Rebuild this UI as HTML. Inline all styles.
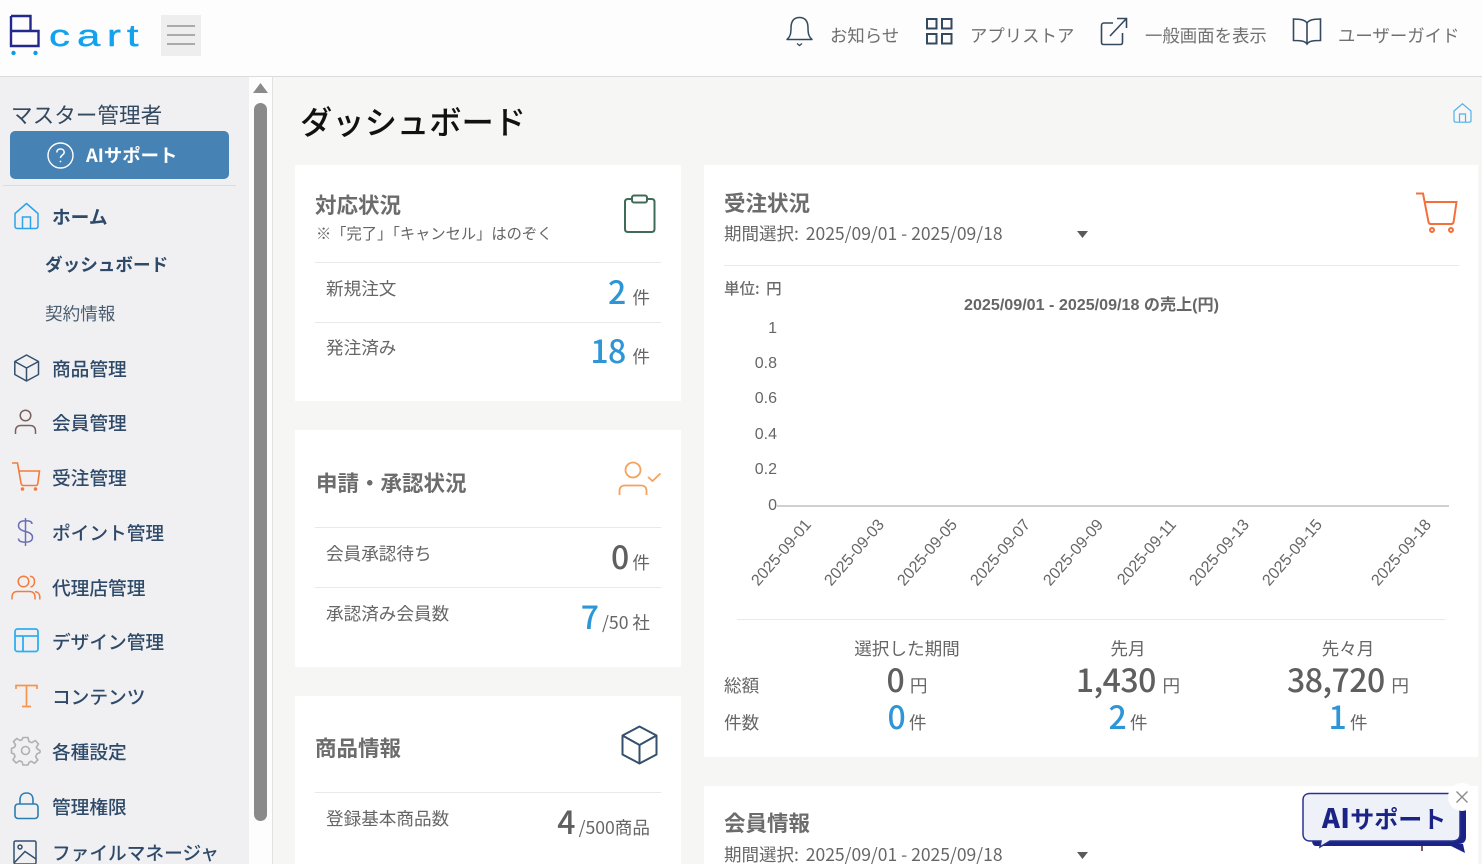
<!DOCTYPE html>
<html lang="ja"><head><meta charset="utf-8"><title>ダッシュボード</title>
<style>
*{box-sizing:border-box}
html,body{margin:0;padding:0;width:1482px;height:864px;overflow:hidden}
body{position:relative;background:#f6f6f4;font-family:"Liberation Sans","Noto Sans CJK JP",sans-serif;color:#666}
.b{position:absolute}
.t{position:absolute;white-space:nowrap;line-height:1;font-family:"Noto Sans CJK JP",sans-serif}
svg{position:absolute;overflow:visible;fill:none}
.hd{font-size:17.4px;color:#707070;top:27px}
.nav{left:52px;font-size:18.7px;color:#2f4a68;font-weight:500}
.card{position:absolute;background:#fff}
.ttl{font-size:21.5px;font-weight:700;color:#6c6c6c}
.lb{font-size:17.6px;color:#666;left:326px}
.hr{position:absolute;height:1px;background:#e9e9e9}
.num{font-size:32px;color:#5f5f5f;font-weight:500;letter-spacing:-.5px}
.bl{color:#2e96d6}
.u{font-size:17.6px;color:#666}
.g{margin-left:3px}
.g2{margin-left:2px}
.r{text-align:right}
.c{text-align:center;transform:translateX(-50%)}
.ax{font:16px "Liberation Sans",sans-serif;fill:#666}
.m{margin-right:3px}
</style></head><body>

<!-- header -->
<div class="b" style="left:0;top:0;width:1482px;height:77px;background:#fdfdfd;border-bottom:1px solid #dcdcdc"></div>
<svg style="left:0;top:0" width="150" height="60">
<path d="M11 16H30.500V31M11 16V46H38.500V31H11" stroke="#23298a" stroke-width="2.400"/>
<circle cx="13.500" cy="53" r="2.200" fill="#0b9bef"/><circle cx="35.500" cy="53" r="2.200" fill="#0b9bef"/>
<text transform="scale(1.35 1)" x="36.300 57 79.300 94" y="46" font-family="Liberation Sans" font-size="31" fill="#13a2ee" stroke="#13a2ee" stroke-width=".4">cart</text>
</svg>
<div class="b" style="left:161px;top:15px;width:40px;height:41px;background:#eeeeee"></div>
<div class="b" style="left:167px;top:25px;width:28px;height:2px;background:#aaa"></div>
<div class="b" style="left:167px;top:34px;width:28px;height:2px;background:#aaa"></div>
<div class="b" style="left:167px;top:43px;width:28px;height:2px;background:#aaa"></div>

<svg style="left:785px;top:15px" width="30" height="32" stroke="#34495e" stroke-width="1.500">
<path d="M2 24.500C5 22 6 19 6 13C6 6 9 2.500 14.500 2.500C20 2.500 23 6 23 13C23 19 24 22 27 24.500Z" stroke-linejoin="round"/><path d="M12 28.500L14.500 30.500L17 28.500" stroke-width="1.300"/></svg>
<div class="t hd" style="left:830px">お知らせ</div>
<svg style="left:926px;top:18px" width="27" height="27" stroke="#34495e" stroke-width="2"><rect x="1" y="1" width="9.500" height="9.500"/><rect x="16" y="1" width="9.500" height="9.500"/><rect x="1" y="16" width="9.500" height="9.500"/><rect x="16" y="16" width="9.500" height="9.500"/></svg>
<div class="t hd" style="left:970px">アプリストア</div>
<svg style="left:1100px;top:17px" width="29" height="29" stroke="#34495e" stroke-width="1.600"><path d="M13 6H4C2 6 1.500 7 1.500 9V25C1.500 27 2 27.500 4 27.500H20C22 27.500 22.500 27 22.500 25V16"/><path d="M10 19L26 2M17 1.500H26.500V11"/></svg>
<div class="t hd" style="left:1145px">一般画面を表示</div>
<svg style="left:1292px;top:17px" width="30" height="29" stroke="#34495e" stroke-width="1.600"><path d="M15 6C13 3 9 2 1.500 2V23.500C9 23.500 13 24 15 27C17 24 21 23.500 28.500 23.500V2C21 2 17 3 15 6ZM15 6V27"/></svg>
<div class="t hd" style="left:1338px">ユーザーガイド</div>

<!-- sidebar -->
<div class="b" style="left:0;top:77px;width:249px;height:787px;background:#f0f0f3"></div>
<div class="b" style="left:249px;top:77px;width:23px;height:787px;background:#fdfdfd"></div>
<div class="b" style="left:272px;top:77px;width:1px;height:787px;background:#e2e2e2"></div>
<svg style="left:253px;top:82px" width="16" height="12"><path d="M7.500 1L15 11H0Z" fill="#8a8a8a"/></svg>
<div class="b" style="left:254px;top:103px;width:13px;height:718px;background:#8a8a8a;border-radius:7px"></div>

<div class="t" style="left:11px;top:104px;font-size:21.6px;color:#33495f">マスター管理者</div>
<div class="b" style="left:10px;top:131px;width:219px;height:48px;background:#4682b4;border-radius:5px"></div>
<svg style="left:47px;top:142px" width="28" height="28" stroke="#fff" stroke-width="1.400"><circle cx="13.500" cy="13.500" r="12.500"/><path d="M9.800 10.500C9.800 8 11.500 7 13.500 7C15.700 7 17.200 8.300 17.200 10.200C17.200 13 13.500 13 13.500 16" stroke-width="1.500"/><circle cx="13.500" cy="19.500" r=".9" fill="#fff" stroke="none"/></svg>
<div class="t" style="left:86px;top:146px;font-size:18.4px;font-weight:700;color:#fff">AIサポート</div>
<div class="b" style="left:3px;top:185px;width:233px;height:1px;background:#dcdcdc"></div>

<svg style="left:14px;top:202px" width="26" height="28" stroke="#2da4ea" stroke-width="1.500"><path d="M1 11.500L12.500 1.500L24 11.500V24C24 26 23 26.500 21.500 26.500H3.500C2 26.500 1 26 1 24Z" stroke-linejoin="round"/><path d="M8.500 26.500V15H16.500V26.500"/></svg>
<div class="t nav" style="top:208px;font-weight:700">ホーム</div>
<div class="t" style="left:45px;top:256px;font-size:17.6px;font-weight:700;color:#2f4a68">ダッシュボード</div>
<div class="t" style="left:45px;top:305px;font-size:17.6px;color:#4a5d70">契約情報</div>

<svg style="left:14px;top:354px" width="26" height="28" stroke="#34506c" stroke-width="1.500" stroke-linejoin="round"><path d="M12.500 1L24.500 7.500V20.500L12.500 27L.8 20.500V7.500ZM.8 7.500L12.500 14L24.500 7.500M12.500 14V27"/></svg>
<div class="t nav" style="top:360px">商品管理</div>
<svg style="left:14px;top:409px" width="24" height="26" stroke="#7a5f5c" stroke-width="1.500"><circle cx="11.500" cy="6.500" r="5.300"/><path d="M1.500 25V22C1.500 18.500 3.500 16.500 7 16.500H16C19.500 16.500 21.500 18.500 21.500 22V25"/></svg>
<div class="t nav" style="top:414px">会員管理</div>
<svg style="left:11px;top:461px" width="30" height="30" stroke="#f47a3a" stroke-width="1.600"><path d="M1 2H6.500L10 22C10.300 24 11 24.500 12.500 24.500H25C26 24.500 26.500 24 26.800 22.500L28.500 10H7.500"/><circle cx="11.500" cy="28" r="1.800" fill="#f47a3a" stroke="none"/><circle cx="24.500" cy="28" r="1.800" fill="#f47a3a" stroke="none"/></svg>
<div class="t nav" style="top:469px">受注管理</div>
<svg style="left:16px;top:517px" width="20" height="30" stroke="#6b6fb5" stroke-width="1.500"><path d="M9.500 1V29M16 7C16 4.500 13.500 3.800 9.500 3.800C5 3.800 2.500 5.500 2.500 8.800C2.500 12 5 13.500 9.500 14.500C14 15.500 16.500 17 16.500 20.300C16.500 23.500 14 25.200 9.500 25.200C5 25.200 2.500 24 2.500 21.500"/></svg>
<div class="t nav" style="top:524px">ポイント管理</div>
<svg style="left:11px;top:575px" width="30" height="26" stroke="#f47d3c" stroke-width="1.500"><circle cx="12.500" cy="6.500" r="5.300"/><path d="M1 24.500V22C1 18.500 3 16.500 6.500 16.500H18.500C22 16.500 24 18.500 24 22V24.500"/><path d="M19 1.300C22 1.500 23.500 3.500 23.500 6.500C23.500 9.500 22 11.500 19.500 12M24 16.800C27 17 28.800 19 28.800 22V24.500"/></svg>
<div class="t nav" style="top:579px">代理店管理</div>
<svg style="left:14px;top:628px" width="25" height="25" stroke="#30aef0" stroke-width="1.800"><rect x="1" y="1" width="23" height="22.500" rx="2.500"/><path d="M1 8H24M9 8V23.500"/></svg>
<div class="t nav" style="top:633px">デザイン管理</div>
<svg style="left:15px;top:684px" width="24" height="24" stroke="#f4954f" stroke-width="1.700"><path d="M1 5V1.500H22V5M11.500 1.500V22.500M7 22.500H16"/></svg>
<div class="t nav" style="top:688px">コンテンツ</div>
<svg style="left:11px;top:736px" width="30" height="30" stroke="#b0b0b0" stroke-width="1.600" stroke-linejoin="round"><circle cx="14.500" cy="14.500" r="4"/><path d="M12 1.500H17L18 5.500L20.800 6.700L24.300 4.500L27.500 8L25.300 11.300L26.300 13L29 14.500V16.500L25.800 18L24.700 20.800L26.800 24L23.500 27.300L20.300 25.300L18 26.300L17 29H12L11 25.800L8.500 24.800L5.200 27L2 23.800L4 20.500L3.200 18L.5 17V12.500L3.500 11.300L4.500 8.800L2.500 5.500L5.800 2.500L9 4.500L11 3.700Z"/></svg>
<div class="t nav" style="top:743px">各種設定</div>
<svg style="left:14px;top:792px" width="25" height="28" stroke="#2a7fb0" stroke-width="1.600"><path d="M6 12V8C6 3.500 8.500 1 12.500 1C16.500 1 19 3.500 19 8V12"/><rect x="1" y="12" width="23" height="14.500" rx="3"/></svg>
<div class="t nav" style="top:798px">管理権限</div>
<svg style="left:13px;top:840px" width="25" height="25" stroke="#34506c" stroke-width="1.500"><rect x="1" y="1" width="22" height="23" rx="1.500"/><circle cx="7" cy="7" r="2"/><path d="M1 23L12 11.500L23 19"/></svg>
<div class="t nav" style="top:844px">ファイルマネージャ</div>

<!-- title -->
<div class="t" style="left:300px;top:105px;font-size:32.3px;font-weight:500;color:#111">ダッシュボード</div>
<svg style="left:1453px;top:103px" width="19" height="20" stroke="#4fb0ec" stroke-width="1.200"><path d="M1 8L9.500 .8L18 8V17.500C18 18.800 17.200 19.200 16 19.200H3C1.800 19.200 1 18.800 1 17.500Z"/><path d="M6.500 19V11H12.500V19"/></svg>

<!-- card 1 -->
<div class="card" style="left:295px;top:165px;width:386px;height:236px"></div>
<div class="t ttl" style="left:315px;top:194px">対応状況</div>
<div class="t" style="left:316px;top:226px;font-size:15.25px;color:#666">※「完了」「キャンセル」はのぞく</div>
<svg style="left:624px;top:194px" width="32" height="40" stroke="#3f6b58" stroke-width="2"><path d="M8 5H4C2 5 1 6 1 8V35C1 37 2 38 4 38H27.500C29.500 38 30.500 37 30.500 35V8C30.500 6 29.500 5 27.500 5H23"/><rect x="8" y="1.500" width="15" height="7" rx="2"/></svg>
<div class="hr" style="left:315px;top:262px;width:346px"></div>
<div class="t lb" style="top:280px">新規注文</div>
<div class="t r" style="right:832px;top:275px"><span class="num bl">2</span> <span class="u g">件</span></div>
<div class="hr" style="left:315px;top:322px;width:346px"></div>
<div class="t lb" style="top:339px">発注済み</div>
<div class="t r" style="right:832px;top:334px"><span class="num bl">18</span> <span class="u g">件</span></div>

<!-- card 2 -->
<div class="card" style="left:295px;top:430px;width:386px;height:237px"></div>
<div class="t ttl" style="left:316px;top:472px">申請・承認状況</div>
<svg style="left:618px;top:460px" width="44" height="37" stroke="#f4a35c" stroke-width="1.800"><circle cx="15" cy="10" r="7.500"/><path d="M1.500 35V31C1.500 27.500 3.500 25.500 7 25.500H23C26.500 25.500 28.500 27.500 28.500 31V35"/><path d="M30 17L34.500 21L42.500 13.500"/></svg>
<div class="hr" style="left:315px;top:527px;width:346px"></div>
<div class="t lb" style="top:545px">会員承認待ち</div>
<div class="t r" style="right:832px;top:540px"><span class="num">0</span> <span class="u">件</span></div>
<div class="hr" style="left:315px;top:587px;width:346px"></div>
<div class="t lb" style="top:605px">承認済み会員数</div>
<div class="t r" style="right:832px;top:600px"><span class="num bl">7</span> <span class="u">/50 社</span></div>

<!-- card 3 -->
<div class="card" style="left:295px;top:696px;width:386px;height:168px"></div>
<div class="t ttl" style="left:315px;top:737px">商品情報</div>
<svg style="left:621px;top:725px" width="37" height="40" stroke="#34506c" stroke-width="2" stroke-linejoin="round"><path d="M18.500 1.500L35.500 10.500V29.500L18.500 38.500L1.500 29.500V10.500ZM1.500 10.500L18.500 20L35.500 10.500M18.500 20V38.500"/></svg>
<div class="hr" style="left:315px;top:792px;width:346px"></div>
<div class="t lb" style="top:810px">登録基本商品数</div>
<div class="t r" style="right:832px;top:805px"><span class="num">4</span> <span class="u">/500商品</span></div>

<!-- order card -->
<div class="card" style="left:704px;top:165px;width:774px;height:592px"></div>
<div class="t ttl" style="left:724px;top:192px">受注状況</div>
<div class="t" style="left:724px;top:225px;font-size:17.5px;color:#666"><span class="m">期間選択:</span> 2025/09/01 - 2025/09/18</div>
<svg style="left:1077px;top:231px" width="11" height="7"><path d="M0 0H11L5.500 7Z" fill="#5a5a5a"/></svg>
<svg style="left:1415px;top:191px" width="44" height="43" stroke="#f4703a" stroke-width="2"><path d="M1 2.500H8L13.500 31C13.800 32.500 14.500 33 16 33H36C37.500 33 38.300 32.500 38.600 31L41.500 11H10"/><circle cx="17" cy="39" r="2" /><circle cx="36" cy="39" r="2"/></svg>
<div class="hr" style="left:724px;top:265px;width:735px"></div>
<div class="t" style="left:724px;top:281px;font-size:15.5px;font-weight:500;color:#6a6a6a"><span class="m">単位:</span> 円</div>

<svg style="left:0;top:0" width="1482" height="864">
<text x="1091.500" y="310" text-anchor="middle" font-family="Liberation Sans,Noto Sans CJK JP,sans-serif" font-size="16.1" font-weight="700" fill="#666">2025/09/01 - 2025/09/18 の売上(円)</text>
<g class="ax" text-anchor="end">
<text x="777" y="333">1</text><text x="777" y="368">0.8</text><text x="777" y="403">0.6</text><text x="777" y="439">0.4</text><text x="777" y="474">0.2</text><text x="777" y="510">0</text>
<text transform="translate(812 525) rotate(-49)">2025-09-01</text>
<text transform="translate(885 525) rotate(-49)">2025-09-03</text>
<text transform="translate(958 525) rotate(-49)">2025-09-05</text>
<text transform="translate(1031 525) rotate(-49)">2025-09-07</text>
<text transform="translate(1104 525) rotate(-49)">2025-09-09</text>
<text transform="translate(1177 525) rotate(-49)">2025-09-11</text>
<text transform="translate(1250 525) rotate(-49)">2025-09-13</text>
<text transform="translate(1323 525) rotate(-49)">2025-09-15</text>
<text transform="translate(1432 525) rotate(-49)">2025-09-18</text>
</g>
<rect x="777" y="505" width="672" height="2" fill="#d0d0d0"/>
</svg>
<div class="hr" style="left:737px;top:619px;width:708px"></div>

<div class="t c" style="left:907px;top:640px;font-size:17.6px">選択した期間</div>
<div class="t c" style="left:1128px;top:640px;font-size:17.6px">先月</div>
<div class="t c" style="left:1348px;top:640px;font-size:17.6px">先々月</div>
<div class="t" style="left:724px;top:677px;font-size:17.6px">総額</div>
<div class="t" style="left:724px;top:714px;font-size:17.6px">件数</div>
<div class="t c" style="left:907px;top:663px"><span class="num">0</span> <span class="u g2">円</span></div>
<div class="t c" style="left:1128px;top:663px"><span class="num">1,430</span> <span class="u g">円</span></div>
<div class="t c" style="left:1348px;top:663px"><span class="num">38,720</span> <span class="u g">円</span></div>
<div class="t c" style="left:907px;top:700px"><span class="num bl">0</span> <span class="u">件</span></div>
<div class="t c" style="left:1128px;top:700px"><span class="num bl">2</span> <span class="u">件</span></div>
<div class="t c" style="left:1348px;top:700px"><span class="num bl">1</span> <span class="u">件</span></div>

<!-- member card -->
<div class="card" style="left:704px;top:786px;width:774px;height:78px"></div>
<div class="t ttl" style="left:724px;top:812px">会員情報</div>
<div class="t" style="left:724px;top:846px;font-size:17.5px;color:#666"><span class="m">期間選択:</span> 2025/09/01 - 2025/09/18</div>
<svg style="left:1077px;top:852px" width="11" height="7"><path d="M0 0H11L5.500 7Z" fill="#5a5a5a"/></svg>

<!-- floating -->
<div class="b" style="left:1421px;top:843px;width:2px;height:8px;background:#7a5f5c"></div>
<svg style="left:1300px;top:790px" width="170" height="65">
<path d="M12 10H166V47C166 52 163 54 158 54H163L165 63L151 56H16C13 56 12 53 12 50Z" fill="#1c2387"/>
<path d="M10 3.500H152C156 3.500 160 5 160 10V44C160 49 157 51 152 51H30L20 57L21 51H10C5.500 51 3 48 3 44V10C3 6 5.500 3.500 10 3.500Z" fill="#eef2f8" stroke="#2a3191" stroke-width="1.500"/>
</svg>
<div class="t" style="left:1322px;top:803px;font-size:27px;font-weight:900;color:#1c2387;letter-spacing:.5px">AI<span style="font-size:24px;font-weight:700;letter-spacing:0">サポート</span></div>
<svg style="left:1448px;top:783px" width="28" height="28"><circle cx="14" cy="14" r="14" fill="#fff"/><path d="M8.500 8.500L19.500 19.500M19.500 8.500L8.500 19.500" stroke="#8a8a8a" stroke-width="1.400"/></svg>

</body></html>
